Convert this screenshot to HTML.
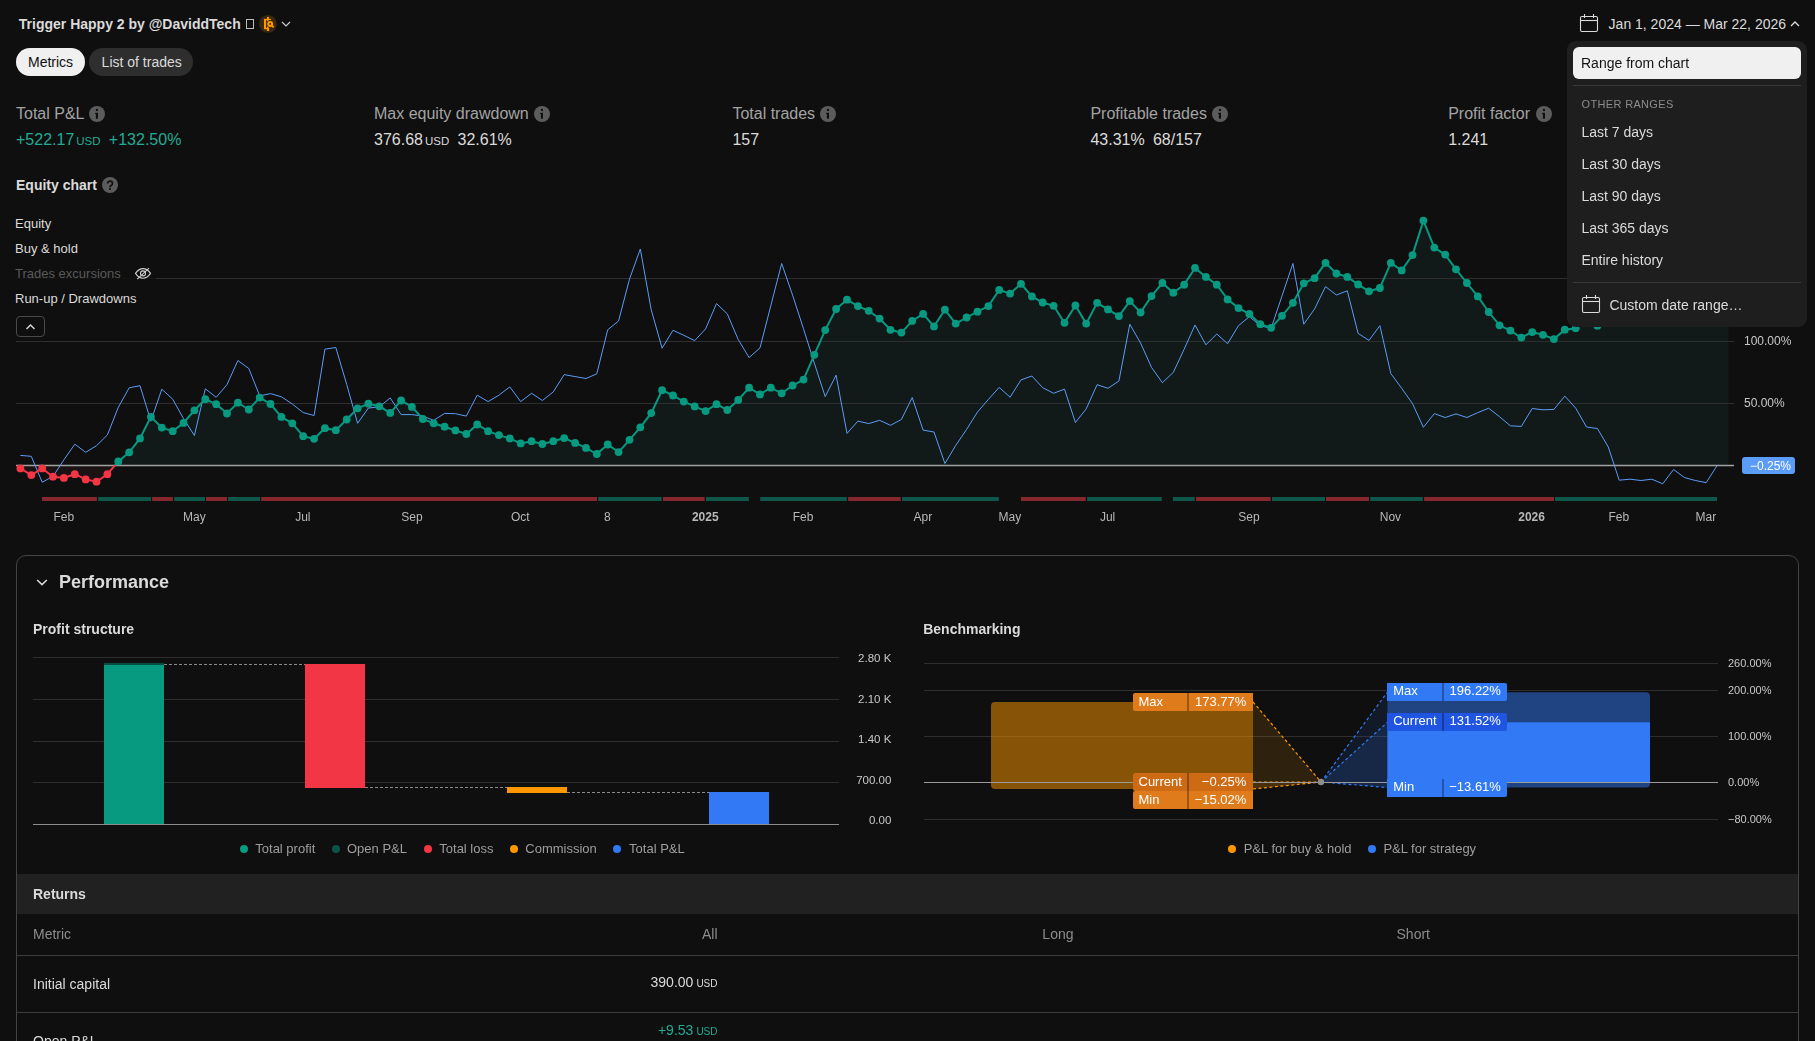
<!DOCTYPE html>
<html><head><meta charset="utf-8"><style>
html,body{margin:0;padding:0;background:#0f0f0f;width:1815px;height:1041px;overflow:hidden;}
body{position:relative;font-family:"Liberation Sans",sans-serif;}
.t{position:absolute;white-space:nowrap;line-height:1.117;}
.r{position:absolute;}
.a{position:absolute;overflow:visible;}
</style></head><body>
<div class="t" style="left:18.8px;top:17.0px;font-size:14px;color:#dbdbdb;font-weight:700;">Trigger Happy 2 by @DaviddTech</div>
<div class="r" style="left:246.0px;top:19.0px;width:8.0px;height:10.0px;background:transparent;border:1px solid #bdbdbd;box-sizing:border-box;"></div>
<svg class="a" style="left:259px;top:15px" width="18" height="18" viewBox="0 0 18 18">
<circle cx="8.93" cy="8.88" r="8.93" fill="#39280f"/>
<g fill="#ff9800"><rect x="7.95" y="1.95" width="2.1" height="14.05"/><rect x="4.97" y="3.93" width="2.15" height="10.24"/><rect x="4.97" y="3.93" width="7.1" height="1.15"/><rect x="4.97" y="12.85" width="5.12" height="1.32"/></g>
<circle cx="11.2" cy="8.9" r="3.7" fill="#39280f"/><line x1="12.6" y1="10.4" x2="14.72" y2="12.19" stroke="#39280f" stroke-width="3.4"/>
<circle cx="11.2" cy="8.9" r="1.95" stroke="#ff9800" stroke-width="2.05" fill="#39280f"/><line x1="12.6" y1="10.5" x2="14.72" y2="12.19" stroke="#ff9800" stroke-width="2"/></svg>
<svg class="a" style="left:281px;top:20px" width="10" height="8" viewBox="0 0 10 8"><path d="M1 2 L5 6 L9 2" stroke="#cfcfcf" stroke-width="1.1" fill="none"/></svg>
<div class="r" style="left:16.0px;top:48.0px;width:69.2px;height:28.0px;background:#f0f0f0;border-radius:14px;"></div>
<div class="t" style="left:28.0px;top:55.0px;font-size:14px;color:#0f0f0f;">Metrics</div>
<div class="r" style="left:89.3px;top:48.0px;width:103.3px;height:28.0px;background:#2e2e2e;border-radius:14px;"></div>
<div class="t" style="left:101.6px;top:55.0px;font-size:14px;color:#dbdbdb;">List of trades</div>
<svg class="a" style="left:1579px;top:13px" width="20" height="20" viewBox="0 0 20 20">
<rect x="1.5" y="3.5" width="17" height="15" rx="1.5" stroke="#dbdbdb" stroke-width="1.1" fill="none"/>
<line x1="1.5" y1="7.5" x2="18.5" y2="7.5" stroke="#dbdbdb" stroke-width="1.1"/>
<line x1="5.5" y1="1" x2="5.5" y2="5" stroke="#dbdbdb" stroke-width="1.1"/><line x1="14.5" y1="1" x2="14.5" y2="5" stroke="#dbdbdb" stroke-width="1.1"/></svg>
<div class="t" style="left:1608.6px;top:17.0px;font-size:14px;color:#dbdbdb;">Jan 1, 2024 — Mar 22, 2026</div>
<svg class="a" style="left:1790px;top:20px" width="10" height="8" viewBox="0 0 10 8"><path d="M1 6 L5 2 L9 6" stroke="#dbdbdb" stroke-width="1.3" fill="none"/></svg>
<div class="t" style="left:16.0px;top:105.0px;font-size:16px;color:#a3a3a3;">Total P&amp;L</div>
<svg class="a" style="left:89.1px;top:106.0px" width="16" height="16" viewBox="0 0 16 16"><circle cx="8" cy="8" r="8" fill="#5c5c5c"/><rect x="6.9" y="6.9" width="2.1" height="5.8" fill="#0f0f0f"/><rect x="6" y="6.9" width="3" height="1.1" fill="#0f0f0f"/><circle cx="7.95" cy="4" r="1.15" fill="#0f0f0f"/></svg>
<div class="t" style="left:16.0px;top:131.0px;font-size:16px;color:#22ab94;"><span style="">+522.17</span><span style="font-size:11.5px;margin-left:2px">USD</span><span style="margin-left:8.3px;">+132.50%</span></div>
<div class="t" style="left:374.0px;top:105.0px;font-size:16px;color:#a3a3a3;">Max equity drawdown</div>
<svg class="a" style="left:534.0px;top:106.0px" width="16" height="16" viewBox="0 0 16 16"><circle cx="8" cy="8" r="8" fill="#5c5c5c"/><rect x="6.9" y="6.9" width="2.1" height="5.8" fill="#0f0f0f"/><rect x="6" y="6.9" width="3" height="1.1" fill="#0f0f0f"/><circle cx="7.95" cy="4" r="1.15" fill="#0f0f0f"/></svg>
<div class="t" style="left:374.0px;top:131.0px;font-size:16px;color:#dbdbdb;"><span style="">376.68</span><span style="font-size:11.5px;margin-left:2px">USD</span><span style="margin-left:8.3px;">32.61%</span></div>
<div class="t" style="left:732.4px;top:105.0px;font-size:16px;color:#a3a3a3;">Total trades</div>
<svg class="a" style="left:820.0px;top:106.0px" width="16" height="16" viewBox="0 0 16 16"><circle cx="8" cy="8" r="8" fill="#5c5c5c"/><rect x="6.9" y="6.9" width="2.1" height="5.8" fill="#0f0f0f"/><rect x="6" y="6.9" width="3" height="1.1" fill="#0f0f0f"/><circle cx="7.95" cy="4" r="1.15" fill="#0f0f0f"/></svg>
<div class="t" style="left:732.4px;top:131.0px;font-size:16px;color:#dbdbdb;"><span style="">157</span></div>
<div class="t" style="left:1090.4px;top:105.0px;font-size:16px;color:#a3a3a3;">Profitable trades</div>
<svg class="a" style="left:1212.0px;top:106.0px" width="16" height="16" viewBox="0 0 16 16"><circle cx="8" cy="8" r="8" fill="#5c5c5c"/><rect x="6.9" y="6.9" width="2.1" height="5.8" fill="#0f0f0f"/><rect x="6" y="6.9" width="3" height="1.1" fill="#0f0f0f"/><circle cx="7.95" cy="4" r="1.15" fill="#0f0f0f"/></svg>
<div class="t" style="left:1090.4px;top:131.0px;font-size:16px;color:#dbdbdb;"><span style="">43.31%</span><span style="margin-left:8.3px;">68/157</span></div>
<div class="t" style="left:1448.2px;top:105.0px;font-size:16px;color:#a3a3a3;">Profit factor</div>
<svg class="a" style="left:1536.0px;top:106.0px" width="16" height="16" viewBox="0 0 16 16"><circle cx="8" cy="8" r="8" fill="#5c5c5c"/><rect x="6.9" y="6.9" width="2.1" height="5.8" fill="#0f0f0f"/><rect x="6" y="6.9" width="3" height="1.1" fill="#0f0f0f"/><circle cx="7.95" cy="4" r="1.15" fill="#0f0f0f"/></svg>
<div class="t" style="left:1448.2px;top:131.0px;font-size:16px;color:#dbdbdb;"><span style="">1.241</span></div>
<div class="t" style="left:16.0px;top:178.0px;font-size:14px;color:#dbdbdb;font-weight:700;">Equity chart</div>
<svg class="a" style="left:102.0px;top:177.0px" width="16" height="16" viewBox="0 0 16 16"><circle cx="8" cy="8" r="8" fill="#5c5c5c"/><path d="M5.6 6.5 C5.6 5.0 6.6 4.2 8 4.2 C9.4 4.2 10.5 5.1 10.5 6.4 C10.5 7.6 9.6 8.1 8.9 8.6 C8.3 9.1 8 9.5 8 10.2" stroke="#111" stroke-width="1.7" fill="none"/><rect x="7.1" y="11.2" width="1.8" height="1.8" fill="#111"/></svg>
<svg class="a" style="left:0;top:0" width="1815" height="560" viewBox="0 0 1815 560"><defs><clipPath id="cabove"><rect x="0" y="0" width="1815" height="465"/></clipPath><clipPath id="cbelow"><rect x="0" y="465" width="1815" height="100"/></clipPath></defs><polygon points="20.4,465.0 20.4,468.4 31.3,475.1 42.2,468.4 53.0,476.7 63.9,477.9 74.8,474.2 85.7,479.4 96.5,481.7 107.4,474.2 118.3,461.4 129.2,452.3 140.0,438.4 150.9,416.8 161.8,427.6 172.7,431.2 183.5,422.9 194.4,410.3 205.3,399.2 216.2,404.2 227.0,413.5 237.9,402.7 248.8,409.5 259.7,397.6 270.5,404.0 281.4,416.9 292.3,423.3 303.2,436.2 314.1,438.8 324.9,428.2 335.8,430.2 346.7,419.5 357.6,408.3 368.4,403.7 379.3,406.3 390.2,412.9 401.1,400.5 411.9,406.9 422.8,419.0 433.7,423.3 444.6,426.7 455.4,430.4 466.3,434.0 477.2,424.5 488.1,431.2 498.9,435.1 509.8,438.4 520.7,443.4 531.6,441.2 542.4,444.0 553.3,441.2 564.2,438.1 575.1,442.9 586.0,447.9 596.8,454.0 607.7,444.5 618.6,452.1 629.5,439.8 640.3,427.3 651.2,413.1 662.1,390.2 673.0,395.5 683.8,401.6 694.7,406.4 705.6,411.1 716.5,404.2 727.3,410.0 738.2,400.0 749.1,387.7 760.0,394.4 770.8,387.7 781.7,393.3 792.6,385.5 803.5,379.6 814.3,354.8 825.2,330.1 836.1,309.0 847.0,299.7 857.9,306.1 868.7,310.8 879.6,318.6 890.5,329.8 901.4,332.6 912.2,320.9 923.1,313.9 934.0,326.4 944.9,309.7 955.7,323.6 966.6,317.5 977.5,311.7 988.4,306.1 999.2,289.9 1010.1,293.6 1021.0,283.8 1031.9,296.4 1042.7,302.5 1053.6,305.8 1064.5,322.8 1075.4,305.5 1086.2,323.6 1097.1,302.8 1108.0,309.4 1118.9,316.1 1129.8,301.1 1140.6,312.5 1151.5,296.1 1162.4,283.0 1173.3,292.7 1184.1,284.7 1195.0,267.9 1205.9,276.9 1216.8,284.7 1227.6,299.4 1238.5,308.1 1249.4,313.9 1260.3,324.2 1271.1,327.8 1282.0,315.8 1292.9,302.8 1303.8,283.3 1314.6,278.2 1325.5,262.9 1336.4,273.5 1347.3,276.9 1358.1,284.4 1369.0,291.3 1379.9,288.0 1390.8,262.9 1401.7,270.4 1412.5,255.1 1423.4,220.6 1434.3,247.6 1445.2,254.6 1456.0,269.3 1466.9,283.0 1477.8,296.4 1488.7,312.0 1499.5,325.3 1510.4,330.6 1521.3,337.6 1532.2,332.1 1543.0,334.8 1553.9,339.1 1564.8,329.7 1575.7,328.2 1586.5,320.0 1597.4,325.7 1608.3,322.0 1619.2,318.0 1630.0,320.0 1640.9,314.0 1651.8,310.0 1662.7,312.0 1673.6,306.0 1684.4,309.0 1695.3,305.0 1706.2,303.0 1717.1,302.0 1728.4,302.0 1728.4,465.0" fill="#121a19" clip-path="url(#cabove)"/><polygon points="20.4,465.0 20.4,468.4 31.3,475.1 42.2,468.4 53.0,476.7 63.9,477.9 74.8,474.2 85.7,479.4 96.5,481.7 107.4,474.2 118.3,461.4 129.2,452.3 140.0,438.4 150.9,416.8 161.8,427.6 172.7,431.2 183.5,422.9 194.4,410.3 205.3,399.2 216.2,404.2 227.0,413.5 237.9,402.7 248.8,409.5 259.7,397.6 270.5,404.0 281.4,416.9 292.3,423.3 303.2,436.2 314.1,438.8 324.9,428.2 335.8,430.2 346.7,419.5 357.6,408.3 368.4,403.7 379.3,406.3 390.2,412.9 401.1,400.5 411.9,406.9 422.8,419.0 433.7,423.3 444.6,426.7 455.4,430.4 466.3,434.0 477.2,424.5 488.1,431.2 498.9,435.1 509.8,438.4 520.7,443.4 531.6,441.2 542.4,444.0 553.3,441.2 564.2,438.1 575.1,442.9 586.0,447.9 596.8,454.0 607.7,444.5 618.6,452.1 629.5,439.8 640.3,427.3 651.2,413.1 662.1,390.2 673.0,395.5 683.8,401.6 694.7,406.4 705.6,411.1 716.5,404.2 727.3,410.0 738.2,400.0 749.1,387.7 760.0,394.4 770.8,387.7 781.7,393.3 792.6,385.5 803.5,379.6 814.3,354.8 825.2,330.1 836.1,309.0 847.0,299.7 857.9,306.1 868.7,310.8 879.6,318.6 890.5,329.8 901.4,332.6 912.2,320.9 923.1,313.9 934.0,326.4 944.9,309.7 955.7,323.6 966.6,317.5 977.5,311.7 988.4,306.1 999.2,289.9 1010.1,293.6 1021.0,283.8 1031.9,296.4 1042.7,302.5 1053.6,305.8 1064.5,322.8 1075.4,305.5 1086.2,323.6 1097.1,302.8 1108.0,309.4 1118.9,316.1 1129.8,301.1 1140.6,312.5 1151.5,296.1 1162.4,283.0 1173.3,292.7 1184.1,284.7 1195.0,267.9 1205.9,276.9 1216.8,284.7 1227.6,299.4 1238.5,308.1 1249.4,313.9 1260.3,324.2 1271.1,327.8 1282.0,315.8 1292.9,302.8 1303.8,283.3 1314.6,278.2 1325.5,262.9 1336.4,273.5 1347.3,276.9 1358.1,284.4 1369.0,291.3 1379.9,288.0 1390.8,262.9 1401.7,270.4 1412.5,255.1 1423.4,220.6 1434.3,247.6 1445.2,254.6 1456.0,269.3 1466.9,283.0 1477.8,296.4 1488.7,312.0 1499.5,325.3 1510.4,330.6 1521.3,337.6 1532.2,332.1 1543.0,334.8 1553.9,339.1 1564.8,329.7 1575.7,328.2 1586.5,320.0 1597.4,325.7 1608.3,322.0 1619.2,318.0 1630.0,320.0 1640.9,314.0 1651.8,310.0 1662.7,312.0 1673.6,306.0 1684.4,309.0 1695.3,305.0 1706.2,303.0 1717.1,302.0 1728.4,302.0 1728.4,465.0" fill="#1a1213" clip-path="url(#cbelow)"/><line x1="16" y1="278.5" x2="1734" y2="278.5" stroke="#2e2e2e" stroke-width="1"/><line x1="16" y1="341.5" x2="1734" y2="341.5" stroke="#2e2e2e" stroke-width="1"/><line x1="16" y1="403.5" x2="1734" y2="403.5" stroke="#2e2e2e" stroke-width="1"/><line x1="16" y1="465.4" x2="1734" y2="465.4" stroke="#a2a2a2" stroke-width="1.5"/><polyline points="20.4,455.4 31.3,456.3 42.2,482.2 53.0,476.5 63.9,459.8 74.8,444.2 85.7,452.3 96.5,445.7 107.4,435.0 118.3,407.3 129.2,387.8 140.0,385.7 150.9,421.2 161.8,389.2 172.7,399.2 183.5,418.6 194.4,435.5 205.3,388.8 216.2,397.3 227.0,384.6 237.9,360.5 248.8,368.5 259.7,395.9 270.5,393.6 281.4,396.8 292.3,404.0 303.2,412.6 314.1,415.5 324.9,349.2 335.8,347.5 346.7,384.4 357.6,423.3 368.4,408.0 379.3,406.9 390.2,397.9 401.1,414.6 411.9,414.6 422.8,416.1 433.7,420.4 444.6,413.4 455.4,413.7 466.3,416.1 477.2,395.2 488.1,401.6 498.9,395.2 509.8,386.9 520.7,401.6 531.6,393.3 542.4,400.5 553.3,391.9 564.2,374.6 575.1,376.6 586.0,378.5 596.8,373.8 607.7,329.8 618.6,320.9 629.5,279.1 640.3,249.0 651.2,309.7 662.1,348.2 673.0,330.3 683.8,335.3 694.7,340.6 705.6,328.9 716.5,303.6 727.3,313.9 738.2,339.5 749.1,357.6 760.0,347.9 770.8,305.7 781.7,263.5 792.6,295.2 803.5,328.8 814.3,363.1 825.2,396.6 836.1,375.2 847.0,433.4 857.9,421.1 868.7,423.6 879.6,420.3 890.5,425.3 901.4,419.5 912.2,397.5 923.1,430.1 934.0,432.0 944.9,463.5 955.7,445.5 966.6,429.4 977.5,412.0 988.4,399.4 999.2,387.4 1010.1,397.2 1021.0,379.9 1031.9,376.0 1042.7,387.7 1053.6,393.3 1064.5,389.1 1075.4,422.5 1086.2,408.9 1097.1,384.7 1108.0,388.3 1118.9,381.0 1129.8,324.2 1140.6,343.1 1151.5,367.4 1162.4,382.7 1173.3,372.4 1184.1,349.3 1195.0,325.0 1205.9,344.8 1216.8,334.0 1227.6,343.7 1238.5,325.6 1249.4,316.7 1260.3,325.6 1271.1,328.4 1282.0,295.9 1292.9,263.5 1303.8,324.2 1314.6,308.9 1325.5,286.6 1336.4,295.0 1347.3,290.8 1358.1,333.4 1369.0,340.4 1379.9,325.6 1390.8,373.5 1401.7,388.3 1412.5,403.6 1423.4,427.3 1434.3,413.6 1445.2,417.5 1456.0,413.9 1466.9,417.5 1477.8,412.6 1488.7,408.2 1499.5,416.7 1510.4,425.8 1521.3,426.4 1532.2,408.5 1543.0,409.8 1553.9,409.4 1564.8,396.1 1575.7,408.1 1586.5,427.0 1597.4,428.5 1608.3,447.0 1619.2,480.2 1630.0,479.2 1640.9,480.5 1651.8,479.2 1662.7,483.8 1673.6,469.5 1684.4,477.5 1695.3,480.5 1706.2,482.6 1717.1,465.6" fill="none" stroke="#5b9cf6" stroke-width="1" stroke-linejoin="round"/><polyline points="20.4,468.4 31.3,475.1 42.2,468.4 53.0,476.7 63.9,477.9 74.8,474.2 85.7,479.4 96.5,481.7 107.4,474.2 118.3,461.4 129.2,452.3 140.0,438.4 150.9,416.8 161.8,427.6 172.7,431.2 183.5,422.9 194.4,410.3 205.3,399.2 216.2,404.2 227.0,413.5 237.9,402.7 248.8,409.5 259.7,397.6 270.5,404.0 281.4,416.9 292.3,423.3 303.2,436.2 314.1,438.8 324.9,428.2 335.8,430.2 346.7,419.5 357.6,408.3 368.4,403.7 379.3,406.3 390.2,412.9 401.1,400.5 411.9,406.9 422.8,419.0 433.7,423.3 444.6,426.7 455.4,430.4 466.3,434.0 477.2,424.5 488.1,431.2 498.9,435.1 509.8,438.4 520.7,443.4 531.6,441.2 542.4,444.0 553.3,441.2 564.2,438.1 575.1,442.9 586.0,447.9 596.8,454.0 607.7,444.5 618.6,452.1 629.5,439.8 640.3,427.3 651.2,413.1 662.1,390.2 673.0,395.5 683.8,401.6 694.7,406.4 705.6,411.1 716.5,404.2 727.3,410.0 738.2,400.0 749.1,387.7 760.0,394.4 770.8,387.7 781.7,393.3 792.6,385.5 803.5,379.6 814.3,354.8 825.2,330.1 836.1,309.0 847.0,299.7 857.9,306.1 868.7,310.8 879.6,318.6 890.5,329.8 901.4,332.6 912.2,320.9 923.1,313.9 934.0,326.4 944.9,309.7 955.7,323.6 966.6,317.5 977.5,311.7 988.4,306.1 999.2,289.9 1010.1,293.6 1021.0,283.8 1031.9,296.4 1042.7,302.5 1053.6,305.8 1064.5,322.8 1075.4,305.5 1086.2,323.6 1097.1,302.8 1108.0,309.4 1118.9,316.1 1129.8,301.1 1140.6,312.5 1151.5,296.1 1162.4,283.0 1173.3,292.7 1184.1,284.7 1195.0,267.9 1205.9,276.9 1216.8,284.7 1227.6,299.4 1238.5,308.1 1249.4,313.9 1260.3,324.2 1271.1,327.8 1282.0,315.8 1292.9,302.8 1303.8,283.3 1314.6,278.2 1325.5,262.9 1336.4,273.5 1347.3,276.9 1358.1,284.4 1369.0,291.3 1379.9,288.0 1390.8,262.9 1401.7,270.4 1412.5,255.1 1423.4,220.6 1434.3,247.6 1445.2,254.6 1456.0,269.3 1466.9,283.0 1477.8,296.4 1488.7,312.0 1499.5,325.3 1510.4,330.6 1521.3,337.6 1532.2,332.1 1543.0,334.8 1553.9,339.1 1564.8,329.7 1575.7,328.2 1586.5,320.0 1597.4,325.7 1608.3,322.0 1619.2,318.0 1630.0,320.0 1640.9,314.0 1651.8,310.0 1662.7,312.0 1673.6,306.0 1684.4,309.0 1695.3,305.0 1706.2,303.0 1717.1,302.0" fill="none" stroke="#089981" stroke-width="2" clip-path="url(#cabove)"/><polyline points="20.4,468.4 31.3,475.1 42.2,468.4 53.0,476.7 63.9,477.9 74.8,474.2 85.7,479.4 96.5,481.7 107.4,474.2 118.3,461.4 129.2,452.3 140.0,438.4 150.9,416.8 161.8,427.6 172.7,431.2 183.5,422.9 194.4,410.3 205.3,399.2 216.2,404.2 227.0,413.5 237.9,402.7 248.8,409.5 259.7,397.6 270.5,404.0 281.4,416.9 292.3,423.3 303.2,436.2 314.1,438.8 324.9,428.2 335.8,430.2 346.7,419.5 357.6,408.3 368.4,403.7 379.3,406.3 390.2,412.9 401.1,400.5 411.9,406.9 422.8,419.0 433.7,423.3 444.6,426.7 455.4,430.4 466.3,434.0 477.2,424.5 488.1,431.2 498.9,435.1 509.8,438.4 520.7,443.4 531.6,441.2 542.4,444.0 553.3,441.2 564.2,438.1 575.1,442.9 586.0,447.9 596.8,454.0 607.7,444.5 618.6,452.1 629.5,439.8 640.3,427.3 651.2,413.1 662.1,390.2 673.0,395.5 683.8,401.6 694.7,406.4 705.6,411.1 716.5,404.2 727.3,410.0 738.2,400.0 749.1,387.7 760.0,394.4 770.8,387.7 781.7,393.3 792.6,385.5 803.5,379.6 814.3,354.8 825.2,330.1 836.1,309.0 847.0,299.7 857.9,306.1 868.7,310.8 879.6,318.6 890.5,329.8 901.4,332.6 912.2,320.9 923.1,313.9 934.0,326.4 944.9,309.7 955.7,323.6 966.6,317.5 977.5,311.7 988.4,306.1 999.2,289.9 1010.1,293.6 1021.0,283.8 1031.9,296.4 1042.7,302.5 1053.6,305.8 1064.5,322.8 1075.4,305.5 1086.2,323.6 1097.1,302.8 1108.0,309.4 1118.9,316.1 1129.8,301.1 1140.6,312.5 1151.5,296.1 1162.4,283.0 1173.3,292.7 1184.1,284.7 1195.0,267.9 1205.9,276.9 1216.8,284.7 1227.6,299.4 1238.5,308.1 1249.4,313.9 1260.3,324.2 1271.1,327.8 1282.0,315.8 1292.9,302.8 1303.8,283.3 1314.6,278.2 1325.5,262.9 1336.4,273.5 1347.3,276.9 1358.1,284.4 1369.0,291.3 1379.9,288.0 1390.8,262.9 1401.7,270.4 1412.5,255.1 1423.4,220.6 1434.3,247.6 1445.2,254.6 1456.0,269.3 1466.9,283.0 1477.8,296.4 1488.7,312.0 1499.5,325.3 1510.4,330.6 1521.3,337.6 1532.2,332.1 1543.0,334.8 1553.9,339.1 1564.8,329.7 1575.7,328.2 1586.5,320.0 1597.4,325.7 1608.3,322.0 1619.2,318.0 1630.0,320.0 1640.9,314.0 1651.8,310.0 1662.7,312.0 1673.6,306.0 1684.4,309.0 1695.3,305.0 1706.2,303.0 1717.1,302.0" fill="none" stroke="#f23645" stroke-width="2" clip-path="url(#cbelow)"/><circle cx="20.4" cy="468.4" r="3.9" fill="#f23645"/><circle cx="31.3" cy="475.1" r="3.9" fill="#f23645"/><circle cx="42.2" cy="468.4" r="3.9" fill="#f23645"/><circle cx="53.0" cy="476.7" r="3.9" fill="#f23645"/><circle cx="63.9" cy="477.9" r="3.9" fill="#f23645"/><circle cx="74.8" cy="474.2" r="3.9" fill="#f23645"/><circle cx="85.7" cy="479.4" r="3.9" fill="#f23645"/><circle cx="96.5" cy="481.7" r="3.9" fill="#f23645"/><circle cx="107.4" cy="474.2" r="3.9" fill="#f23645"/><circle cx="118.3" cy="461.4" r="3.9" fill="#089981"/><circle cx="129.2" cy="452.3" r="3.9" fill="#089981"/><circle cx="140.0" cy="438.4" r="3.9" fill="#089981"/><circle cx="150.9" cy="416.8" r="3.9" fill="#089981"/><circle cx="161.8" cy="427.6" r="3.9" fill="#089981"/><circle cx="172.7" cy="431.2" r="3.9" fill="#089981"/><circle cx="183.5" cy="422.9" r="3.9" fill="#089981"/><circle cx="194.4" cy="410.3" r="3.9" fill="#089981"/><circle cx="205.3" cy="399.2" r="3.9" fill="#089981"/><circle cx="216.2" cy="404.2" r="3.9" fill="#089981"/><circle cx="227.0" cy="413.5" r="3.9" fill="#089981"/><circle cx="237.9" cy="402.7" r="3.9" fill="#089981"/><circle cx="248.8" cy="409.5" r="3.9" fill="#089981"/><circle cx="259.7" cy="397.6" r="3.9" fill="#089981"/><circle cx="270.5" cy="404.0" r="3.9" fill="#089981"/><circle cx="281.4" cy="416.9" r="3.9" fill="#089981"/><circle cx="292.3" cy="423.3" r="3.9" fill="#089981"/><circle cx="303.2" cy="436.2" r="3.9" fill="#089981"/><circle cx="314.1" cy="438.8" r="3.9" fill="#089981"/><circle cx="324.9" cy="428.2" r="3.9" fill="#089981"/><circle cx="335.8" cy="430.2" r="3.9" fill="#089981"/><circle cx="346.7" cy="419.5" r="3.9" fill="#089981"/><circle cx="357.6" cy="408.3" r="3.9" fill="#089981"/><circle cx="368.4" cy="403.7" r="3.9" fill="#089981"/><circle cx="379.3" cy="406.3" r="3.9" fill="#089981"/><circle cx="390.2" cy="412.9" r="3.9" fill="#089981"/><circle cx="401.1" cy="400.5" r="3.9" fill="#089981"/><circle cx="411.9" cy="406.9" r="3.9" fill="#089981"/><circle cx="422.8" cy="419.0" r="3.9" fill="#089981"/><circle cx="433.7" cy="423.3" r="3.9" fill="#089981"/><circle cx="444.6" cy="426.7" r="3.9" fill="#089981"/><circle cx="455.4" cy="430.4" r="3.9" fill="#089981"/><circle cx="466.3" cy="434.0" r="3.9" fill="#089981"/><circle cx="477.2" cy="424.5" r="3.9" fill="#089981"/><circle cx="488.1" cy="431.2" r="3.9" fill="#089981"/><circle cx="498.9" cy="435.1" r="3.9" fill="#089981"/><circle cx="509.8" cy="438.4" r="3.9" fill="#089981"/><circle cx="520.7" cy="443.4" r="3.9" fill="#089981"/><circle cx="531.6" cy="441.2" r="3.9" fill="#089981"/><circle cx="542.4" cy="444.0" r="3.9" fill="#089981"/><circle cx="553.3" cy="441.2" r="3.9" fill="#089981"/><circle cx="564.2" cy="438.1" r="3.9" fill="#089981"/><circle cx="575.1" cy="442.9" r="3.9" fill="#089981"/><circle cx="586.0" cy="447.9" r="3.9" fill="#089981"/><circle cx="596.8" cy="454.0" r="3.9" fill="#089981"/><circle cx="607.7" cy="444.5" r="3.9" fill="#089981"/><circle cx="618.6" cy="452.1" r="3.9" fill="#089981"/><circle cx="629.5" cy="439.8" r="3.9" fill="#089981"/><circle cx="640.3" cy="427.3" r="3.9" fill="#089981"/><circle cx="651.2" cy="413.1" r="3.9" fill="#089981"/><circle cx="662.1" cy="390.2" r="3.9" fill="#089981"/><circle cx="673.0" cy="395.5" r="3.9" fill="#089981"/><circle cx="683.8" cy="401.6" r="3.9" fill="#089981"/><circle cx="694.7" cy="406.4" r="3.9" fill="#089981"/><circle cx="705.6" cy="411.1" r="3.9" fill="#089981"/><circle cx="716.5" cy="404.2" r="3.9" fill="#089981"/><circle cx="727.3" cy="410.0" r="3.9" fill="#089981"/><circle cx="738.2" cy="400.0" r="3.9" fill="#089981"/><circle cx="749.1" cy="387.7" r="3.9" fill="#089981"/><circle cx="760.0" cy="394.4" r="3.9" fill="#089981"/><circle cx="770.8" cy="387.7" r="3.9" fill="#089981"/><circle cx="781.7" cy="393.3" r="3.9" fill="#089981"/><circle cx="792.6" cy="385.5" r="3.9" fill="#089981"/><circle cx="803.5" cy="379.6" r="3.9" fill="#089981"/><circle cx="814.3" cy="354.8" r="3.9" fill="#089981"/><circle cx="825.2" cy="330.1" r="3.9" fill="#089981"/><circle cx="836.1" cy="309.0" r="3.9" fill="#089981"/><circle cx="847.0" cy="299.7" r="3.9" fill="#089981"/><circle cx="857.9" cy="306.1" r="3.9" fill="#089981"/><circle cx="868.7" cy="310.8" r="3.9" fill="#089981"/><circle cx="879.6" cy="318.6" r="3.9" fill="#089981"/><circle cx="890.5" cy="329.8" r="3.9" fill="#089981"/><circle cx="901.4" cy="332.6" r="3.9" fill="#089981"/><circle cx="912.2" cy="320.9" r="3.9" fill="#089981"/><circle cx="923.1" cy="313.9" r="3.9" fill="#089981"/><circle cx="934.0" cy="326.4" r="3.9" fill="#089981"/><circle cx="944.9" cy="309.7" r="3.9" fill="#089981"/><circle cx="955.7" cy="323.6" r="3.9" fill="#089981"/><circle cx="966.6" cy="317.5" r="3.9" fill="#089981"/><circle cx="977.5" cy="311.7" r="3.9" fill="#089981"/><circle cx="988.4" cy="306.1" r="3.9" fill="#089981"/><circle cx="999.2" cy="289.9" r="3.9" fill="#089981"/><circle cx="1010.1" cy="293.6" r="3.9" fill="#089981"/><circle cx="1021.0" cy="283.8" r="3.9" fill="#089981"/><circle cx="1031.9" cy="296.4" r="3.9" fill="#089981"/><circle cx="1042.7" cy="302.5" r="3.9" fill="#089981"/><circle cx="1053.6" cy="305.8" r="3.9" fill="#089981"/><circle cx="1064.5" cy="322.8" r="3.9" fill="#089981"/><circle cx="1075.4" cy="305.5" r="3.9" fill="#089981"/><circle cx="1086.2" cy="323.6" r="3.9" fill="#089981"/><circle cx="1097.1" cy="302.8" r="3.9" fill="#089981"/><circle cx="1108.0" cy="309.4" r="3.9" fill="#089981"/><circle cx="1118.9" cy="316.1" r="3.9" fill="#089981"/><circle cx="1129.8" cy="301.1" r="3.9" fill="#089981"/><circle cx="1140.6" cy="312.5" r="3.9" fill="#089981"/><circle cx="1151.5" cy="296.1" r="3.9" fill="#089981"/><circle cx="1162.4" cy="283.0" r="3.9" fill="#089981"/><circle cx="1173.3" cy="292.7" r="3.9" fill="#089981"/><circle cx="1184.1" cy="284.7" r="3.9" fill="#089981"/><circle cx="1195.0" cy="267.9" r="3.9" fill="#089981"/><circle cx="1205.9" cy="276.9" r="3.9" fill="#089981"/><circle cx="1216.8" cy="284.7" r="3.9" fill="#089981"/><circle cx="1227.6" cy="299.4" r="3.9" fill="#089981"/><circle cx="1238.5" cy="308.1" r="3.9" fill="#089981"/><circle cx="1249.4" cy="313.9" r="3.9" fill="#089981"/><circle cx="1260.3" cy="324.2" r="3.9" fill="#089981"/><circle cx="1271.1" cy="327.8" r="3.9" fill="#089981"/><circle cx="1282.0" cy="315.8" r="3.9" fill="#089981"/><circle cx="1292.9" cy="302.8" r="3.9" fill="#089981"/><circle cx="1303.8" cy="283.3" r="3.9" fill="#089981"/><circle cx="1314.6" cy="278.2" r="3.9" fill="#089981"/><circle cx="1325.5" cy="262.9" r="3.9" fill="#089981"/><circle cx="1336.4" cy="273.5" r="3.9" fill="#089981"/><circle cx="1347.3" cy="276.9" r="3.9" fill="#089981"/><circle cx="1358.1" cy="284.4" r="3.9" fill="#089981"/><circle cx="1369.0" cy="291.3" r="3.9" fill="#089981"/><circle cx="1379.9" cy="288.0" r="3.9" fill="#089981"/><circle cx="1390.8" cy="262.9" r="3.9" fill="#089981"/><circle cx="1401.7" cy="270.4" r="3.9" fill="#089981"/><circle cx="1412.5" cy="255.1" r="3.9" fill="#089981"/><circle cx="1423.4" cy="220.6" r="3.9" fill="#089981"/><circle cx="1434.3" cy="247.6" r="3.9" fill="#089981"/><circle cx="1445.2" cy="254.6" r="3.9" fill="#089981"/><circle cx="1456.0" cy="269.3" r="3.9" fill="#089981"/><circle cx="1466.9" cy="283.0" r="3.9" fill="#089981"/><circle cx="1477.8" cy="296.4" r="3.9" fill="#089981"/><circle cx="1488.7" cy="312.0" r="3.9" fill="#089981"/><circle cx="1499.5" cy="325.3" r="3.9" fill="#089981"/><circle cx="1510.4" cy="330.6" r="3.9" fill="#089981"/><circle cx="1521.3" cy="337.6" r="3.9" fill="#089981"/><circle cx="1532.2" cy="332.1" r="3.9" fill="#089981"/><circle cx="1543.0" cy="334.8" r="3.9" fill="#089981"/><circle cx="1553.9" cy="339.1" r="3.9" fill="#089981"/><circle cx="1564.8" cy="329.7" r="3.9" fill="#089981"/><circle cx="1575.7" cy="328.2" r="3.9" fill="#089981"/><circle cx="1586.5" cy="320.0" r="3.9" fill="#089981"/><circle cx="1597.4" cy="325.7" r="3.9" fill="#089981"/><circle cx="1608.3" cy="322.0" r="3.9" fill="#089981"/><circle cx="1619.2" cy="318.0" r="3.9" fill="#089981"/><circle cx="1630.0" cy="320.0" r="3.9" fill="#089981"/><circle cx="1640.9" cy="314.0" r="3.9" fill="#089981"/><circle cx="1651.8" cy="310.0" r="3.9" fill="#089981"/><circle cx="1662.7" cy="312.0" r="3.9" fill="#089981"/><circle cx="1673.6" cy="306.0" r="3.9" fill="#089981"/><circle cx="1684.4" cy="309.0" r="3.9" fill="#089981"/><circle cx="1695.3" cy="305.0" r="3.9" fill="#089981"/><circle cx="1706.2" cy="303.0" r="3.9" fill="#089981"/><circle cx="1717.1" cy="302.0" r="3.9" fill="#089981"/><rect x="42.0" y="497" width="54.9" height="4" fill="#88262d"/><rect x="98.2" y="497" width="52.9" height="4" fill="#0d584b"/><rect x="152.1" y="497" width="20.8" height="4" fill="#88262d"/><rect x="174.2" y="497" width="30.8" height="4" fill="#0d584b"/><rect x="206.0" y="497" width="21.1" height="4" fill="#88262d"/><rect x="228.1" y="497" width="32.1" height="4" fill="#0d584b"/><rect x="261.2" y="497" width="335.8" height="4" fill="#88262d"/><rect x="598.2" y="497" width="63.5" height="4" fill="#0d584b"/><rect x="663.0" y="497" width="41.6" height="4" fill="#88262d"/><rect x="706.0" y="497" width="42.9" height="4" fill="#0d584b"/><rect x="760.2" y="497" width="86.6" height="4" fill="#0d584b"/><rect x="848.1" y="497" width="52.6" height="4" fill="#88262d"/><rect x="902.0" y="497" width="96.8" height="4" fill="#0d584b"/><rect x="1021.0" y="497" width="64.8" height="4" fill="#88262d"/><rect x="1087.1" y="497" width="74.7" height="4" fill="#0d584b"/><rect x="1172.9" y="497" width="21.8" height="4" fill="#0d584b"/><rect x="1196.0" y="497" width="74.7" height="4" fill="#88262d"/><rect x="1272.0" y="497" width="53.0" height="4" fill="#0d584b"/><rect x="1326.0" y="497" width="43.0" height="4" fill="#88262d"/><rect x="1370.2" y="497" width="52.6" height="4" fill="#0d584b"/><rect x="1424.1" y="497" width="129.9" height="4" fill="#88262d"/><rect x="1555.0" y="497" width="162.0" height="4" fill="#0d584b"/></svg>
<div class="r" style="left:12.0px;top:210.0px;width:144.0px;height:102.0px;background:#0f0f0f;opacity:0.85;"></div>
<div class="t" style="left:15.0px;top:217.0px;font-size:13px;color:#dbdbdb;">Equity</div>
<div class="t" style="left:15.0px;top:242.0px;font-size:13px;color:#dbdbdb;">Buy &amp; hold</div>
<div class="t" style="left:15.0px;top:267.0px;font-size:13px;color:#5a5a5a;">Trades excursions</div>
<svg class="a" style="left:134px;top:266px" width="18" height="15" viewBox="0 0 18 15">
<path d="M1.5 7.4 C4 3.6 6.8 2.6 9 2.6 C11.2 2.6 14 3.6 16.5 7.4 C14 11.2 11.2 12.2 9 12.2 C6.8 12.2 4 11.2 1.5 7.4 Z" stroke="#cfcfcf" stroke-width="1.1" fill="none"/>
<circle cx="9" cy="7.4" r="2.5" stroke="#cfcfcf" stroke-width="1.1" fill="none"/>
<line x1="15" y1="2.2" x2="3.3" y2="13.2" stroke="#cfcfcf" stroke-width="1.1"/></svg>
<div class="t" style="left:15.0px;top:292.0px;font-size:13px;color:#dbdbdb;">Run-up / Drawdowns</div>
<div class="r" style="left:16.0px;top:316.4px;width:29.0px;height:20.2px;background:transparent;border-radius:4px;border:1px solid #4a4a4a;box-sizing:border-box;"></div>
<svg class="a" style="left:25px;top:322.5px" width="11" height="8" viewBox="0 0 11 8"><path d="M1.5 6 L5.5 2 L9.5 6" stroke="#dbdbdb" stroke-width="1.4" fill="none"/></svg>
<div style="position:absolute;left:0;top:300px;width:1815px;height:240px;will-change:transform"><div style="position:absolute;left:0;top:-300px;width:1815px;height:1041px">
<div class="t" style="left:63.8px;transform:translateX(-50%);top:511.0px;font-size:12px;color:#b8b8b8;">Feb</div>
<div class="t" style="left:194.4px;transform:translateX(-50%);top:511.0px;font-size:12px;color:#b8b8b8;">May</div>
<div class="t" style="left:302.8px;transform:translateX(-50%);top:511.0px;font-size:12px;color:#b8b8b8;">Jul</div>
<div class="t" style="left:411.9px;transform:translateX(-50%);top:511.0px;font-size:12px;color:#b8b8b8;">Sep</div>
<div class="t" style="left:520.3px;transform:translateX(-50%);top:511.0px;font-size:12px;color:#b8b8b8;">Oct</div>
<div class="t" style="left:607.4px;transform:translateX(-50%);top:511.0px;font-size:12px;color:#b8b8b8;">8</div>
<div class="t" style="left:705.3px;transform:translateX(-50%);top:511.0px;font-size:12px;color:#b8b8b8;font-weight:700;">2025</div>
<div class="t" style="left:803.1px;transform:translateX(-50%);top:511.0px;font-size:12px;color:#b8b8b8;">Feb</div>
<div class="t" style="left:922.8px;transform:translateX(-50%);top:511.0px;font-size:12px;color:#b8b8b8;">Apr</div>
<div class="t" style="left:1009.8px;transform:translateX(-50%);top:511.0px;font-size:12px;color:#b8b8b8;">May</div>
<div class="t" style="left:1107.6px;transform:translateX(-50%);top:511.0px;font-size:12px;color:#b8b8b8;">Jul</div>
<div class="t" style="left:1248.9px;transform:translateX(-50%);top:511.0px;font-size:12px;color:#b8b8b8;">Sep</div>
<div class="t" style="left:1390.4px;transform:translateX(-50%);top:511.0px;font-size:12px;color:#b8b8b8;">Nov</div>
<div class="t" style="left:1531.6px;transform:translateX(-50%);top:511.0px;font-size:12px;color:#b8b8b8;font-weight:700;">2026</div>
<div class="t" style="left:1618.8px;transform:translateX(-50%);top:511.0px;font-size:12px;color:#b8b8b8;">Feb</div>
<div class="t" style="left:1705.8px;transform:translateX(-50%);top:511.0px;font-size:12px;color:#b8b8b8;">Mar</div>
<div class="t" style="left:1744.0px;top:335.0px;font-size:12px;color:#c8c8c8;">100.00%</div>
<div class="t" style="left:1744.0px;top:397.0px;font-size:12px;color:#c8c8c8;">50.00%</div>
<div class="r" style="left:1741.5px;top:457.0px;width:53.9px;height:17.0px;background:#5b9cf6;border-radius:3px;"></div>
<div class="t" style="right:24.0px;top:460.0px;font-size:12px;color:#ffffff;">−0.25%</div>
</div></div>
<div style="position:absolute;left:0;top:0;width:1815px;height:340px;will-change:transform">
<div class="r" style="left:1567.0px;top:41.0px;width:240.0px;height:286.0px;background:#1e1e1e;border-radius:9px;"></div>
<div class="r" style="left:1573.0px;top:47.0px;width:228.0px;height:32.0px;background:#f0f0f0;border-radius:6px;"></div>
<div class="t" style="left:1581.0px;top:56.0px;font-size:14px;color:#131313;">Range from chart</div>
<div class="r" style="left:1573.0px;top:84.5px;width:228.0px;height:1.0px;background:#3a3a3a;"></div>
<div class="t" style="left:1581.6px;top:98.0px;font-size:11px;color:#8c8c8c;letter-spacing:0.33px;">OTHER RANGES</div>
<div class="t" style="left:1581.4px;top:125.0px;font-size:14px;color:#dbdbdb;">Last 7 days</div>
<div class="t" style="left:1581.4px;top:157.0px;font-size:14px;color:#dbdbdb;">Last 30 days</div>
<div class="t" style="left:1581.4px;top:189.0px;font-size:14px;color:#dbdbdb;">Last 90 days</div>
<div class="t" style="left:1581.4px;top:221.0px;font-size:14px;color:#dbdbdb;">Last 365 days</div>
<div class="t" style="left:1581.4px;top:253.0px;font-size:14px;color:#dbdbdb;">Entire history</div>
<div class="r" style="left:1573.0px;top:281.5px;width:228.0px;height:1.0px;background:#3a3a3a;"></div>
<svg class="a" style="left:1581px;top:294px" width="20" height="20" viewBox="0 0 20 20">
<rect x="1.5" y="3.5" width="17" height="15" rx="1.5" stroke="#dbdbdb" stroke-width="1.1" fill="none"/>
<line x1="1.5" y1="7.5" x2="18.5" y2="7.5" stroke="#dbdbdb" stroke-width="1.1"/>
<line x1="5.5" y1="1" x2="5.5" y2="5" stroke="#dbdbdb" stroke-width="1.1"/><line x1="14.5" y1="1" x2="14.5" y2="5" stroke="#dbdbdb" stroke-width="1.1"/></svg>
<div class="t" style="left:1609.4px;top:298.0px;font-size:14px;color:#dbdbdb;">Custom date range…</div>
</div>
<div class="r" style="left:16.0px;top:555.0px;width:1783.2px;height:545.0px;background:transparent;border-radius:10px;border:1px solid #444444;box-sizing:border-box;"></div>
<svg class="a" style="left:35px;top:577px" width="14" height="10" viewBox="0 0 14 10"><path d="M2.2 3 L7 7.6 L11.8 3" stroke="#dbdbdb" stroke-width="1.5" fill="none"/></svg>
<div class="t" style="left:59.0px;top:572.0px;font-size:18px;color:#dbdbdb;font-weight:700;">Performance</div>
<div class="t" style="left:33.0px;top:622.0px;font-size:14px;color:#dbdbdb;font-weight:700;">Profit structure</div>
<div class="t" style="left:923.2px;top:622.0px;font-size:14px;color:#dbdbdb;font-weight:700;">Benchmarking</div>
<svg class="a" style="left:0;top:540px" width="1815" height="340" viewBox="0 540 1815 340"><line x1="33" y1="657.5" x2="839" y2="657.5" stroke="#2e2e2e"/><line x1="33" y1="699.5" x2="839" y2="699.5" stroke="#2e2e2e"/><line x1="33" y1="741.5" x2="839" y2="741.5" stroke="#2e2e2e"/><line x1="33" y1="782.5" x2="839" y2="782.5" stroke="#2e2e2e"/><line x1="33" y1="824.5" x2="839" y2="824.5" stroke="#8c8c8c"/><rect x="104" y="665" width="60" height="159" fill="#089981"/><rect x="104" y="663" width="60" height="2" fill="#064c40"/><rect x="305" y="664" width="60" height="124" fill="#f23645"/><rect x="507" y="787" width="60" height="6" fill="#ff9800"/><rect x="709" y="792" width="60" height="32" fill="#3179f5"/><line x1="164" y1="664.5" x2="305" y2="664.5" stroke="#8a8a8a" stroke-dasharray="3,2"/><line x1="365" y1="787.5" x2="507" y2="787.5" stroke="#8a8a8a" stroke-dasharray="3,2"/><line x1="567" y1="792.5" x2="709" y2="792.5" stroke="#8a8a8a" stroke-dasharray="3,2"/><line x1="924" y1="663.5" x2="1718" y2="663.5" stroke="#2e2e2e"/><line x1="924" y1="690.5" x2="1718" y2="690.5" stroke="#2e2e2e"/><line x1="924" y1="736.5" x2="1718" y2="736.5" stroke="#2e2e2e"/><line x1="924" y1="819.5" x2="1718" y2="819.5" stroke="#2e2e2e"/><path d="M995 702 H1253 V789 H995 Q991 789 991 785 V706 Q991 702 995 702 Z" fill="#ff9800" fill-opacity="0.5"/><polygon points="1253,702 1321,782 1253,789" fill="#ff9800" fill-opacity="0.13"/><polygon points="1253,782 1321,782 1253,789" fill="#ff9800" fill-opacity="0.13"/><line x1="1253" y1="702" x2="1321" y2="782" stroke="#ff9800" stroke-width="1.2" stroke-dasharray="3,2.5"/><line x1="1253" y1="782" x2="1321" y2="782" stroke="#ff9800" stroke-width="1.2" stroke-dasharray="3,2.5"/><line x1="1253" y1="789" x2="1321" y2="782" stroke="#ff9800" stroke-width="1.2" stroke-dasharray="3,2.5"/><polygon points="1321,782 1387.4,692.2 1387.4,787.6" fill="#3179f5" fill-opacity="0.11"/><polygon points="1321,782 1387.4,722.3 1387.4,787.6" fill="#3179f5" fill-opacity="0.15"/><path d="M1387.4 692.2 H1646 Q1650 692.2 1650 696.2 V783.6 Q1650 787.6 1646 787.6 H1387.4 Z" fill="#3179f5" fill-opacity="0.5"/><rect x="1387.4" y="722.3" width="262.6" height="59.7" fill="#3179f5"/><line x1="1321" y1="782" x2="1387.4" y2="692.2" stroke="#3179f5" stroke-width="1.2" stroke-dasharray="3,2.5"/><line x1="1321" y1="782" x2="1387.4" y2="722.3" stroke="#3179f5" stroke-width="1.2" stroke-dasharray="3,2.5"/><line x1="1321" y1="782" x2="1387.4" y2="787.6" stroke="#3179f5" stroke-width="1.2" stroke-dasharray="3,2.5"/><line x1="924" y1="782.5" x2="1718" y2="782.5" stroke="#9a9a9a"/><circle cx="1321" cy="782" r="3.2" fill="#8c8c8c"/></svg>
<div class="t" style="right:923.7px;top:652.0px;font-size:11.5px;color:#c8c8c8;">2.80 K</div>
<div class="t" style="right:923.7px;top:693.0px;font-size:11.5px;color:#c8c8c8;">2.10 K</div>
<div class="t" style="right:923.7px;top:733.0px;font-size:11.5px;color:#c8c8c8;">1.40 K</div>
<div class="t" style="right:923.7px;top:774.0px;font-size:11.5px;color:#c8c8c8;">700.00</div>
<div class="t" style="right:923.7px;top:814.0px;font-size:11.5px;color:#c8c8c8;">0.00</div>
<div class="t" style="left:1728.0px;top:657.0px;font-size:11px;color:#c8c8c8;">260.00%</div>
<div class="t" style="left:1728.0px;top:684.0px;font-size:11px;color:#c8c8c8;">200.00%</div>
<div class="t" style="left:1728.0px;top:730.0px;font-size:11px;color:#c8c8c8;">100.00%</div>
<div class="t" style="left:1728.0px;top:776.0px;font-size:11px;color:#c8c8c8;">0.00%</div>
<div class="t" style="left:1728.0px;top:813.0px;font-size:11px;color:#c8c8c8;">−80.00%</div>
<div class="r" style="left:1132.7px;top:693.0px;width:120.1px;height:17.6px;background:#e07b1b;border-radius:2px 0 0 2px;"></div>
<div class="r" style="left:1187.0px;top:693.0px;width:2.0px;height:17.6px;background:rgba(0,0,0,0.3);"></div>
<div class="t" style="left:1138.5px;top:695.0px;font-size:13px;color:#ffffff;">Max</div>
<div class="t" style="right:568.7px;top:695.0px;font-size:13px;color:#ffffff;">173.77%</div>
<div class="r" style="left:1132.7px;top:773.1px;width:120.1px;height:17.6px;background:#cd6b15;border-radius:2px 0 0 2px;"></div>
<div class="r" style="left:1187.0px;top:773.1px;width:2.0px;height:17.6px;background:rgba(0,0,0,0.3);"></div>
<div class="t" style="left:1138.5px;top:775.0px;font-size:13px;color:#ffffff;">Current</div>
<div class="t" style="right:568.7px;top:775.0px;font-size:13px;color:#ffffff;">−0.25%</div>
<div class="r" style="left:1132.7px;top:791.1px;width:120.1px;height:17.6px;background:#e07b1b;border-radius:2px 0 0 2px;"></div>
<div class="r" style="left:1187.0px;top:791.1px;width:2.0px;height:17.6px;background:rgba(0,0,0,0.3);"></div>
<div class="t" style="left:1138.5px;top:793.0px;font-size:13px;color:#ffffff;">Min</div>
<div class="t" style="right:568.7px;top:793.0px;font-size:13px;color:#ffffff;">−15.02%</div>
<div class="r" style="left:1387.4px;top:683.1px;width:120.0px;height:17.6px;background:#3179f5;border-radius:0 2px 2px 0;"></div>
<div class="r" style="left:1442.0px;top:683.1px;width:2.0px;height:17.6px;background:rgba(0,0,0,0.3);"></div>
<div class="t" style="left:1393.2px;top:684.0px;font-size:13px;color:#ffffff;">Max</div>
<div class="t" style="right:314.1px;top:684.0px;font-size:13px;color:#ffffff;">196.22%</div>
<div class="r" style="left:1387.4px;top:713.2px;width:120.0px;height:17.6px;background:#1f55e0;border-radius:0 2px 2px 0;"></div>
<div class="r" style="left:1442.0px;top:713.2px;width:2.0px;height:17.6px;background:rgba(0,0,0,0.3);"></div>
<div class="t" style="left:1393.2px;top:714.0px;font-size:13px;color:#ffffff;">Current</div>
<div class="t" style="right:314.1px;top:714.0px;font-size:13px;color:#ffffff;">131.52%</div>
<div class="r" style="left:1387.4px;top:779.0px;width:120.0px;height:17.6px;background:#3179f5;border-radius:0 2px 2px 0;"></div>
<div class="r" style="left:1442.0px;top:779.0px;width:2.0px;height:17.6px;background:rgba(0,0,0,0.3);"></div>
<div class="t" style="left:1393.2px;top:780.0px;font-size:13px;color:#ffffff;">Min</div>
<div class="t" style="right:314.1px;top:780.0px;font-size:13px;color:#ffffff;">−13.61%</div>
<div class="r" style="left:240.0px;top:845px;width:8px;height:8px;border-radius:4px;background:#089981"></div>
<div class="t" style="left:255.3px;top:842.0px;font-size:13px;color:#9e9e9e;">Total profit</div>
<div class="r" style="left:332.0px;top:845px;width:8px;height:8px;border-radius:4px;background:#0b5446"></div>
<div class="t" style="left:347.0px;top:842.0px;font-size:13px;color:#9e9e9e;">Open P&amp;L</div>
<div class="r" style="left:424.0px;top:845px;width:8px;height:8px;border-radius:4px;background:#f23645"></div>
<div class="t" style="left:439.3px;top:842.0px;font-size:13px;color:#9e9e9e;">Total loss</div>
<div class="r" style="left:510.0px;top:845px;width:8px;height:8px;border-radius:4px;background:#ff9800"></div>
<div class="t" style="left:525.3px;top:842.0px;font-size:13px;color:#9e9e9e;">Commission</div>
<div class="r" style="left:613.0px;top:845px;width:8px;height:8px;border-radius:4px;background:#3179f5"></div>
<div class="t" style="left:629.1px;top:842.0px;font-size:13px;color:#9e9e9e;">Total P&amp;L</div>
<div class="r" style="left:1227.7px;top:845px;width:8px;height:8px;border-radius:4px;background:#ff9800"></div>
<div class="t" style="left:1243.7px;top:842.0px;font-size:13px;color:#9e9e9e;">P&amp;L for buy &amp; hold</div>
<div class="r" style="left:1367.8px;top:845px;width:8px;height:8px;border-radius:4px;background:#3179f5"></div>
<div class="t" style="left:1383.4px;top:842.0px;font-size:13px;color:#9e9e9e;">P&amp;L for strategy</div>
<div class="r" style="left:17.0px;top:874.0px;width:1781.2px;height:40.0px;background:#212121;"></div>
<div class="t" style="left:33.0px;top:887.0px;font-size:14px;color:#dbdbdb;font-weight:700;">Returns</div>
<div class="t" style="left:33.0px;top:927.0px;font-size:14px;color:#8c8c8c;">Metric</div>
<div class="t" style="right:1097.5px;top:927.0px;font-size:14px;color:#8c8c8c;">All</div>
<div class="t" style="right:741.5px;top:927.0px;font-size:14px;color:#8c8c8c;">Long</div>
<div class="t" style="right:385.0px;top:927.0px;font-size:14px;color:#8c8c8c;">Short</div>
<div class="r" style="left:17.0px;top:955.0px;width:1781.2px;height:1.0px;background:#3d3d3d;"></div>
<div class="t" style="left:33.0px;top:977.0px;font-size:14px;color:#dbdbdb;">Initial capital</div>
<div class="t" style="right:1097.5px;top:975.0px;font-size:14px;color:#dbdbdb;">390.00<span style="font-size:10px;margin-left:3px">USD</span></div>
<div class="r" style="left:17.0px;top:1012.0px;width:1781.2px;height:1.0px;background:#3d3d3d;"></div>
<div class="t" style="left:33.0px;top:1034.0px;font-size:14px;color:#dbdbdb;">Open P&amp;L</div>
<div class="t" style="right:1097.5px;top:1023.0px;font-size:14px;color:#22ab94;">+9.53<span style="font-size:10px;margin-left:3px">USD</span></div>
</body></html>
